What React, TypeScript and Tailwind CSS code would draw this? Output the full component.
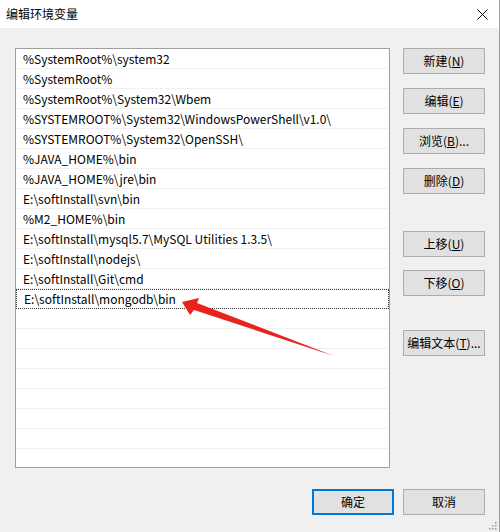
import React from "react";

const items = [
  "%SystemRoot%\\system32",
  "%SystemRoot%",
  "%SystemRoot%\\System32\\Wbem",
  "%SYSTEMROOT%\\System32\\WindowsPowerShell\\v1.0\\",
  "%SYSTEMROOT%\\System32\\OpenSSH\\",
  "%JAVA_HOME%\\bin",
  "%JAVA_HOME%\\jre\\bin",
  "E:\\softInstall\\svn\\bin",
  "%M2_HOME%\\bin",
  "E:\\softInstall\\mysql5.7\\MySQL Utilities 1.3.5\\",
  "E:\\softInstall\\nodejs\\",
  "E:\\softInstall\\Git\\cmd",
  "E:\\softInstall\\mongodb\\bin",
  "",
  "",
  "",
  "",
  "",
  "",
  "",
  "",
];

const font = { fontFamily: '"Noto Sans CJK SC", "Noto Sans", sans-serif' };

function Btn({ label, k, suffix = "", primary = false }: { label: string; k: string; suffix?: string; primary?: boolean }) {
  return (
    <div
      className={
        "w-[82px] h-[26px] flex items-center justify-center text-[12px] text-[#000] bg-[#e1e1e1] " +
        (primary ? "border-2 border-[#0078d7]" : "border border-[#adadad]")
      }
    >
      <span>
        {label}
        {k && (
          <>
            (<span className="underline">{k}</span>)
          </>
        )}
        {suffix}
      </span>
    </div>
  );
}

export default function App() {
  return (
    <div className="w-[500px] h-[532px] bg-[#f0f0f0] flex flex-col relative border-r border-[#a0a0a0]" style={font}>
      <div className="h-[28px] bg-white flex items-center justify-between pl-[6px] pr-[11px]">
        <span className="text-[12px] text-black">编辑环境变量</span>
        <svg width="11" height="11" viewBox="0 0 11 11">
          <path d="M0.5 0.5 L10.5 10.5 M10.5 0.5 L0.5 10.5" stroke="#111" strokeWidth="1" />
        </svg>
      </div>
      <div className="flex pt-[20px] pl-[15px]">
        <div className="w-[375px] h-[420px] bg-white border border-[#a0a0a0] overflow-hidden">
          {items.map((t, i) => (
            <div
              key={i}
              className={
                "h-[20px] flex items-center pl-[7px] text-[12px] text-black whitespace-nowrap " +
                (i === 12 ? "border border-dotted border-[#333] pl-[6px]" : "border-b border-[#f0f0f0]")
              }
            >
              {t}
            </div>
          ))}
        </div>
        <div className="flex flex-col ml-[13px] mt-[0px]">
          <Btn label="新建" k="N" />
          <div className="h-[14px]" />
          <Btn label="编辑" k="E" />
          <div className="h-[14px]" />
          <Btn label="浏览" k="B" suffix="..." />
          <div className="h-[14px]" />
          <Btn label="删除" k="D" />
          <div className="h-[37px]" />
          <Btn label="上移" k="U" />
          <div className="h-[13px]" />
          <Btn label="下移" k="O" />
          <div className="h-[34px]" />
          <Btn label="编辑文本" k="T" suffix="..." />
        </div>
      </div>
      <div className="flex justify-end gap-[9px] pr-[14px] mt-[21px]">
        <Btn label="确定" k="" primary />
        <Btn label="取消" k="" />
      </div>
      <svg className="absolute left-0 top-0 pointer-events-none" width="500" height="532">
        <polygon points="182,302 199,298 197,303 334,356 194,310 190,315" fill="#e8231b" />
      </svg>
      <svg className="absolute right-[2px] bottom-[2px]" width="10" height="10">
        {[
          [8, 2],
          [5, 5],
          [8, 5],
          [2, 8],
          [5, 8],
          [8, 8],
        ].map(([x, y], i) => (
          <rect key={i} x={x} y={y} width="1.5" height="1.5" fill="#999" />
        ))}
      </svg>
    </div>
  );
}
